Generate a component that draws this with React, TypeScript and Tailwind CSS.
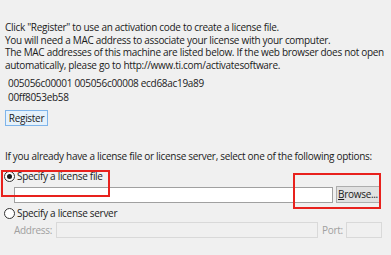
import React from "react";

function Radio({ checked }: { checked?: boolean }) {
  return (
    <span className="flex h-[11px] w-[11px] shrink-0 items-center justify-center rounded-full border border-[#333333] bg-white">
      {checked && <span className="h-[5px] w-[5px] rounded-full bg-[#1a1a1a]" />}
    </span>
  );
}

export default function App() {
  return (
    <div
      className="relative h-[255px] w-[391px] overflow-hidden bg-[#f0f0f0] text-[10px] tracking-[-0.3px] text-[#1b1b1b]"
      style={{ fontFamily: '"Open Sans", "Noto Sans", sans-serif' }}
    >
      <div className="flex flex-col">
        <div className="pl-[5px] pt-[21px] leading-[12.5px] whitespace-nowrap">
          <div>Click "Register" to use an activation code to create a license file.</div>
          <div>You will need a MAC address to associate your license with your computer.</div>
          <div>The MAC addresses of this machine are listed below. If the web browser does not open</div>
          <div>automatically, please go to http://www.ti.com/activatesoftware.</div>
        </div>
        <div className="mt-[5px] pl-[8px] leading-[14px] whitespace-nowrap">
          <div>005056c00001 005056c00008 ecd68ac19a89</div>
          <div>00ff8053eb58</div>
        </div>
        <div className="ml-[5px] mt-[6px] flex">
          <button className="flex h-[16px] w-[43px] items-center justify-center border border-[#7eb4ea] bg-[#e5f1fb] leading-[13px] text-[#1b1b1b]">
            Register
          </button>
        </div>
        <div className="mt-[24px] pl-[5px] leading-[13px] whitespace-nowrap">
          If you already have a license file or license server, select one of the following options:
        </div>
        <div className="mt-[7px] flex h-[13px] items-center gap-[2px] pl-[4px] whitespace-nowrap">
          <Radio checked />
          <span className="leading-[13px]">Specify a license file</span>
        </div>
        <div className="mt-[3px] flex items-center gap-[3px] pl-[14px]">
          <div className="h-[16px] w-[319px] shrink-0 border border-[#a0a0a0] bg-white" />
          <button className="flex h-[17px] w-[44px] shrink-0 items-center justify-center border border-[#adadad] bg-[#e1e1e1] leading-[13px] whitespace-nowrap">
            <span>
              <span className="underline">B</span>rowse...
            </span>
          </button>
        </div>
        <div className="mt-[4px] flex h-[13px] items-center gap-[2px] pl-[4px] whitespace-nowrap">
          <Radio />
          <span className="leading-[13px]">Specify a license server</span>
        </div>
        <div className="mt-[2px] flex items-center pl-[14px] text-[#a0a0a0] whitespace-nowrap">
          <span className="w-[42px] shrink-0 leading-[13px]">Address:</span>
          <div className="h-[16px] w-[262px] shrink-0 border border-[#d9d9d9] bg-[#f0f0f0]" />
          <span className="ml-[4px] w-[24px] shrink-0 leading-[13px]">Port:</span>
          <div className="h-[16px] w-[36px] shrink-0 border border-[#d9d9d9] bg-[#f0f0f0]" />
        </div>
      </div>
      <div className="absolute left-[1px] top-[170px] h-[27px] w-[109px] border-2 border-[#e8211d]" />
      <div className="absolute left-[293px] top-[173px] h-[36px] w-[88px] border-2 border-[#e8211d]" />
    </div>
  );
}
